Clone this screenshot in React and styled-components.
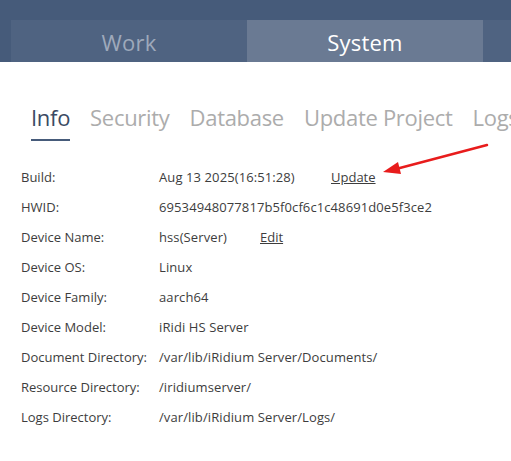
import React from 'react'
import styled, { createGlobalStyle } from 'styled-components'

const GlobalStyle = createGlobalStyle`
	html, body {
		margin: 0;
		padding: 0;
		background: #fff;
	}
	body {
		font-family: 'Open Sans', 'Noto Sans', sans-serif;
		overflow: hidden;
	}
`

const Page = styled.div`
	position: relative;
	width: 511px;
	height: 461px;
	overflow: hidden;
`

const Header = styled.div`
	background: #465b7a;
	padding: 20px 0 0 11px;
`

const TabRow = styled.div`
	display: flex;
	height: 42px;
	overflow: hidden;
`

const MainTab = styled.div`
	flex: 0 0 236px;
	display: flex;
	align-items: center;
	justify-content: center;
	padding-top: 1px;
	font-size: 22px;
	letter-spacing: 0.2px;
	background: ${(p) => (p.active ? '#6a7a93' : '#4f6381')};
	color: ${(p) => (p.active ? '#ffffff' : '#9ea9bb')};
`

const Content = styled.div`
	padding: 0 0 0 21px;
`

const SubTabs = styled.div`
	display: flex;
	gap: 20px;
	padding: 40px 0 0 10px;
	white-space: nowrap;
`

const SubTab = styled.div`
	font-size: 22px;
	line-height: 30px;
	letter-spacing: -0.3px;
	padding-bottom: 7px;
	color: ${(p) => (p.active ? '#3b4a63' : '#acacac')};
	border-bottom: 2px solid ${(p) => (p.active ? '#465b7a' : 'transparent')};
`

const InfoList = styled.div`
	display: flex;
	flex-direction: column;
	padding-top: 21px;
`

const Row = styled.div`
	display: flex;
	align-items: center;
	height: 30px;
	font-size: 13px;
	color: #3d3d3d;
	white-space: nowrap;
`

const Label = styled.div`
	width: 138px;
	flex: none;
`

const Value = styled.div`
	width: ${(p) => (p.w ? p.w + 'px' : 'auto')};
	letter-spacing: 0.1px;
	flex: none;
`

const Link = styled.a`
	color: #3d3d3d;
	text-decoration: underline;
	cursor: pointer;
`

const Arrow = styled.svg`
	position: absolute;
	left: 0;
	top: 0;
	pointer-events: none;
`

const rows = [
	{ label: 'Build:', value: 'Aug 13 2025(16:51:28)', w: 172, link: 'Update' },
	{ label: 'HWID:', value: '69534948077817b5f0cf6c1c48691d0e5f3ce2' },
	{ label: 'Device Name:', value: 'hss(Server)', w: 101, link: 'Edit' },
	{ label: 'Device OS:', value: 'Linux' },
	{ label: 'Device Family:', value: 'aarch64' },
	{ label: 'Device Model:', value: 'iRidi HS Server' },
	{ label: 'Document Directory:', value: '/var/lib/iRidium Server/Documents/' },
	{ label: 'Resource Directory:', value: '/iridiumserver/' },
	{ label: 'Logs Directory:', value: '/var/lib/iRidium Server/Logs/' },
]

const subTabs = ['Info', 'Security', 'Database', 'Update Project', 'Logs']

const App = () => {
	return (
		<Page>
			<GlobalStyle />
			<Header>
				<TabRow>
					<MainTab>Work</MainTab>
					<MainTab active>System</MainTab>
					<MainTab>Other</MainTab>
				</TabRow>
			</Header>
			<Content>
				<SubTabs>
					{subTabs.map((t, i) => (
						<SubTab key={t} active={i === 0}>
							{t}
						</SubTab>
					))}
				</SubTabs>
				<InfoList>
					{rows.map((r) => (
						<Row key={r.label}>
							<Label>{r.label}</Label>
							<Value w={r.w}>{r.value}</Value>
							{r.link && <Link>{r.link}</Link>}
						</Row>
					))}
				</InfoList>
			</Content>
			<Arrow width="511" height="461">
				<line x1="487" y1="145" x2="396" y2="169" stroke="#e81c1c" strokeWidth="2.5" strokeLinecap="round" />
				<polygon points="383,172 398,162 401,174" fill="#e81c1c" />
			</Arrow>
		</Page>
	)
}

export default App
